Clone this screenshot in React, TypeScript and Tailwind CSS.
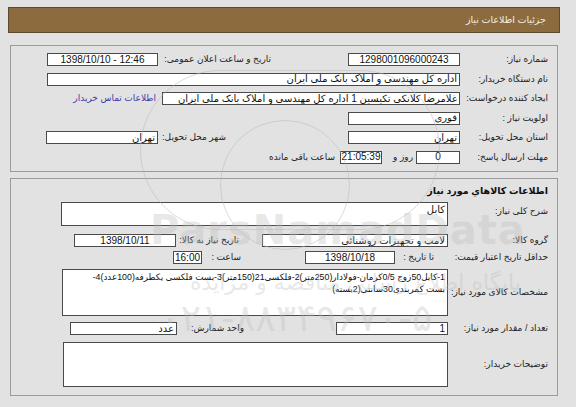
import React from "react";

const font = { fontFamily: '"Liberation Sans", "DejaVu Sans", sans-serif' };

function Box({
  w,
  h = 13,
  children,
  align = "right",
  ltr = false,
}: {
  w: number;
  h?: number;
  children?: React.ReactNode;
  align?: "right" | "center";
  ltr?: boolean;
}) {
  return (
    <div
      dir={ltr ? "ltr" : "rtl"}
      className={`shrink-0 flex items-center bg-white border border-[#4a4a4a] px-[2px] text-[10px] leading-none text-[#111] overflow-hidden whitespace-nowrap ${
        align === "center" ? "justify-center" : "justify-start"
      }`}
      style={{ width: w, height: h }}
    >
      {children}
    </div>
  );
}

function Label({ w, children, className = "" }: { w: number; children: React.ReactNode; className?: string }) {
  return (
    <div className={`shrink-0 text-right text-[9px] text-[#222] whitespace-nowrap ${className}`} style={{ width: w }}>
      {children}
    </div>
  );
}

function Gap({ w }: { w: number }) {
  return <div className="shrink-0" style={{ width: w }} />;
}

export default function App() {
  return (
    <div dir="rtl" style={font} className="relative w-[576px] h-[407px] overflow-hidden bg-[#e2e2e2]">
      <div className="pt-[7px] pr-[16px] pl-[8px]">
        {/* header */}
        <div className="h-[26px] bg-[#8c6c3f] border border-[#5b4a32] flex items-center pr-[13px]">
          <span className="text-[9.5px] text-[#f4efe4]">جزئیات اطلاعات نیاز</span>
        </div>

        {/* panel 1 */}
        <div className="mt-[12px] mx-[2px] border border-[#9c9c9c] pt-[4px] pb-[4px] pr-[9px]">
          <div className="h-[19.5px] flex items-center">
            <Label w={88}>شماره نیاز:</Label>
            <Box w={112} align="center" ltr>1298001096000243</Box>
            <Gap w={77} />
            <Label w={108}>تاریخ و ساعت اعلان عمومی:</Label>
            <Gap w={5} />
            <Box w={111} align="center" ltr>1398/10/10 - 12:46</Box>
          </div>
          <div className="h-[19.5px] flex items-center">
            <Label w={88}>نام دستگاه خریدار:</Label>
            <Box w={413}>اداره کل مهندسی و املاک بانک ملی ایران</Box>
          </div>
          <div className="h-[19.5px] flex items-center">
            <Label w={88}>ایجاد کننده درخواست:</Label>
            <Box w={298}>غلامرضا کلانکی تکیسین 1 اداره کل مهندسی و املاک بانک ملی ایران</Box>
            <Gap w={6} />
            <a className="shrink-0 w-[80px] text-right text-[9px] text-[#3c3ca8] whitespace-nowrap">اطلاعات تماس خریدار</a>
          </div>
          <div className="h-[19.5px] flex items-center">
            <Label w={88}>اولویت نیاز :</Label>
            <Box w={112}>فوری</Box>
          </div>
          <div className="h-[19.5px] flex items-center">
            <Label w={88}>استان محل تحویل:</Label>
            <Box w={112}>تهران</Box>
            <Gap w={122} />
            <Label w={68}>شهر محل تحویل:</Label>
            <Box w={112}>تهران</Box>
          </div>
          <div className="h-[19.5px] flex items-center">
            <Label w={88}>مهلت ارسال پاسخ:</Label>
            <Box w={44} align="center" ltr>0</Box>
            <Gap w={3} />
            <Label w={28}>روز و</Label>
            <Gap w={3} />
            <Box w={42} align="center" ltr>21:05:39</Box>
            <Gap w={5} />
            <Label w={70}>ساعت باقی مانده</Label>
          </div>
        </div>

        {/* panel 2 */}
        <div className="mt-[6px] mx-[2px] border border-[#9c9c9c] pt-[1px] pb-[8px] pr-[9px]">
          <div className="h-[21px] pt-[2px] flex items-center">
            <div className="text-[9.5px] font-bold text-[#111]">اطلاعات کالاهاي مورد نياز</div>
          </div>
          <div className="mt-[1px] flex items-start">
            <Label w={100} className="mt-[3px]">شرح کلی نیاز:</Label>
            <div className="shrink-0 w-[387px] h-[24px] bg-white border border-[#4a4a4a] px-[2px] text-[10px] leading-[13px] text-[#111] text-right">
              کابل
            </div>
          </div>
          <div className="mt-[6px] h-[17px] flex items-center">
            <Label w={100}>گروه کالا:</Label>
            <Box w={186}>لامپ و تجهیزات روشنائی</Box>
            <Gap w={23} />
            <Label w={63}>تاریخ نیاز به کالا:</Label>
            <Box w={102} align="center" ltr>1398/10/11</Box>
          </div>
          <div className="h-[17px] flex items-center">
            <Label w={100}>حداقل تاریخ اعتبار قیمت:</Label>
            <Gap w={14} />
            <Label w={36}>تا تاریخ :</Label>
            <Gap w={3} />
            <Box w={90} align="center" ltr>1398/10/18</Box>
            <Gap w={64} />
            <Label w={36}>ساعت :</Label>
            <Gap w={3} />
            <Box w={29} align="center" ltr>16:00</Box>
          </div>
          <div className="mt-[3px] flex items-center">
            <Label w={100}>مشخصات کالای مورد نیاز:</Label>
            <div className="shrink-0 w-[386px] h-[47px] bg-white border border-[#4a4a4a] px-[2px] pt-[1px] text-[8.8px] leading-[12px] text-[#111] text-right whitespace-nowrap overflow-hidden">
              1-کابل50زوج 0/5کرمان-فولادار(250متر)2-فلکسی21(150متر)3-بست فلکسی یکطرفه(100عدد)4-
              <br />
              بست کمربندی30سانتی(2بسته)
            </div>
          </div>
          <div className="mt-[6px] h-[13px] flex items-center">
            <Label w={100}>تعداد / مقدار مورد نیاز:</Label>
            <Box w={112}>1</Box>
            <Gap w={92} />
            <Label w={62}>واحد شمارش:</Label>
            <Gap w={5} />
            <Box w={107}>عدد</Box>
          </div>
          <div className="mt-[7px] flex items-center">
            <Label w={100}>توضیحات خریدار:</Label>
            <div className="shrink-0 w-[385px] h-[45px] bg-white border border-[#4a4a4a]" />
          </div>
        </div>
      </div>

      {/* watermark overlay */}
      <div className="pointer-events-none absolute inset-0" dir="ltr">
        <div className="absolute left-[140px] top-[70px] w-[300px] h-[160px] rounded-full border border-[#b8b8b8]/50" />
        <div className="absolute left-[220px] top-[120px] w-[130px] h-[130px] rounded-full border border-[#b8b8b8]/50" />
        <div className="absolute left-[150px] top-[200px] text-[40px] font-bold text-[#bdbdbd]/35 tracking-[1px]" style={{ fontFamily: '"DejaVu Sans", sans-serif' }}>
          ParsNamadData
        </div>
        <div className="absolute left-[190px] top-[266px] text-[22px] text-[#bdbdbd]/35" style={{ fontFamily: '"DejaVu Sans", sans-serif' }}>
          پایگاه اطلاع رسانی مناقصه و مزایده
        </div>
        <div className="absolute left-[160px] top-[290px] text-[38px] text-[#bdbdbd]/35" style={{ fontFamily: '"DejaVu Sans", sans-serif' }}>
          ۰۲۱-۸۸۳۴۹۶۷۰-۵
        </div>
      </div>
    </div>
  );
}
